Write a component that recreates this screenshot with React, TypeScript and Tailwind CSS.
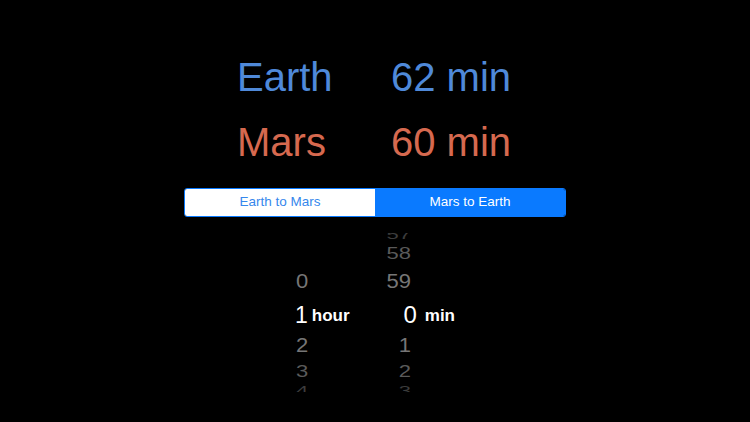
import React from "react";

const FONT = { fontFamily: '"Liberation Sans", Arial, sans-serif' };

interface PickerRow {
  hour: string;
  min: string;
  h: string;
  color: string;
  scale: string;
}

const rows: PickerRow[] = [
  { hour: "", min: "57", h: "h-[16px]", color: "text-[#3c3c3c]", scale: "scale-y-[0.55]" },
  { hour: "", min: "58", h: "h-[23px]", color: "text-[#5a5a5a]", scale: "scale-y-[0.78]" },
  { hour: "0", min: "59", h: "h-[31px]", color: "text-[#767676]", scale: "scale-y-[0.95]" },
];

const rowsBelow: PickerRow[] = [
  { hour: "2", min: "1", h: "h-[31px]", color: "text-[#767676]", scale: "scale-y-[0.92]" },
  { hour: "3", min: "2", h: "h-[21px]", color: "text-[#5a5a5a]", scale: "scale-y-[0.75]" },
  { hour: "4", min: "3", h: "h-[16px]", color: "text-[#3c3c3c]", scale: "scale-y-[0.55]" },
];

function Row({ row }: { row: PickerRow }) {
  return (
    <div className={`flex items-center ${row.h} ${row.color}`}>
      <div className="w-[80px] pl-[1px]">
        <span className={`inline-block text-[22px] leading-none ${row.scale}`}>
          {row.hour}
        </span>
      </div>
      <div className="w-[36px] text-right">
        <span className={`inline-block text-[22px] leading-none ${row.scale}`}>
          {row.min}
        </span>
      </div>
    </div>
  );
}

export default function App() {
  return (
    <div className="h-[422px] w-[750px] overflow-hidden bg-black" style={FONT}>
      {/* Travel times */}
      <div className="mx-auto w-[276px] pt-[45px]">
        <div className="flex h-[65px] items-center text-[40px] leading-[65px] text-[#4f89d9]">
          <span className="w-[154px]">Earth</span>
          <span>62 min</span>
        </div>
        <div className="flex h-[65px] items-center text-[40px] leading-[65px] text-[#d6694f]">
          <span className="w-[154px]">Mars</span>
          <span>60 min</span>
        </div>
      </div>

      {/* Direction switch */}
      <div className="mx-auto mt-[13px] flex h-[29px] w-[382px] overflow-hidden rounded-[3px] border border-[#0a7aff] text-[13.5px]">
        <div className="flex flex-1 items-center justify-center bg-white text-[#3587ec]">
          Earth to Mars
        </div>
        <div className="flex flex-1 items-center justify-center bg-[#0a7aff] text-white">
          Mars to Earth
        </div>
      </div>

      {/* Picker */}
      <div className="mt-[16px] h-[159px] overflow-hidden">
        <div className="mx-auto -mt-[5px] w-[160px]">
          {rows.map((r, i) => (
            <Row key={"a" + i} row={r} />
          ))}
          <div className="flex h-[34px] items-center text-white">
            <div className="flex w-[80px] items-center">
              <span className="text-[23px] leading-none">1</span>
              <span className="ml-[4px] text-[17px] font-semibold leading-none">hour</span>
            </div>
            <div className="flex items-center">
              <span className="w-[43px] text-right text-[24px] leading-none">0</span>
              <span className="ml-[8px] text-[17px] font-semibold leading-none">min</span>
            </div>
          </div>
          {rowsBelow.map((r, i) => (
            <Row key={"b" + i} row={r} />
          ))}
        </div>
      </div>
    </div>
  );
}
